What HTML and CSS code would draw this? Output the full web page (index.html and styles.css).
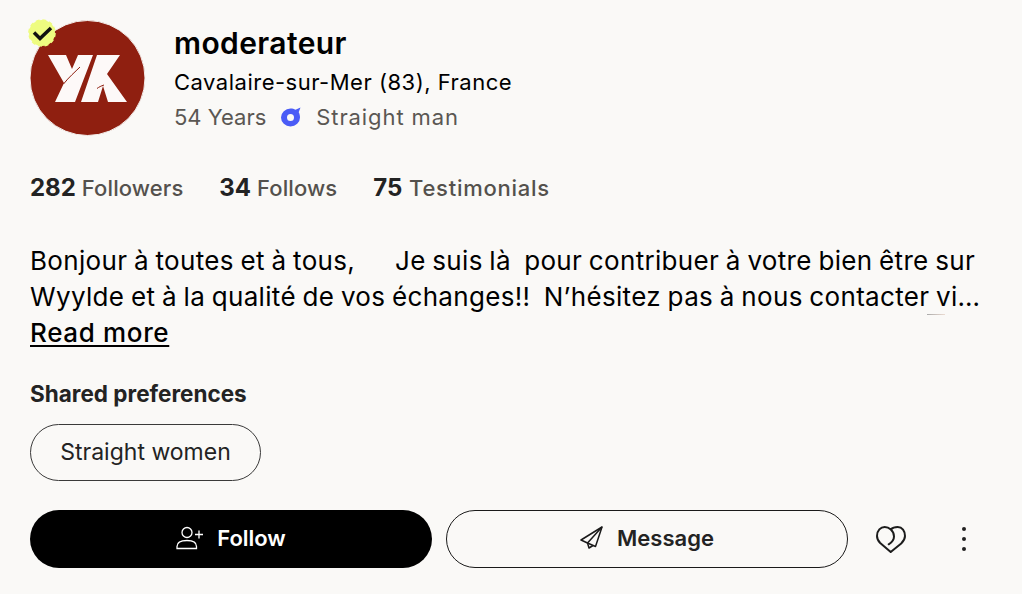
FILE: index.html
```html
<!DOCTYPE html>
<html lang="en">
<head>
<meta charset="utf-8">
<title>moderateur</title>
<link rel="stylesheet" href="styles.css">
</head>
<body>
<main class="profile">
  <header class="head">
    <div class="avatar">
      <svg class="logo" viewBox="0 0 116 116" aria-hidden="true">
        <circle cx="57.500" cy="58" r="57.500" fill="#8f1f10" stroke="#f4efec" stroke-width="1"/>
        <path fill="#fdf9f8" d="M18 35H36L42 49 48 35H63L45 82H25L34 63Z"/>
        <path fill="#fdf9f8" d="M67 35H90L77 54 97 82H78L73 66 68 82H51Z"/>
        <path fill="none" stroke="#8f1f10" stroke-width="1" d="M50 47C45 52 39 57 33.500 64M74 65C71 66 69 67 67 68.500"/>
      </svg>
      <svg class="badge" viewBox="0 0 28 28" aria-hidden="true">
        <circle cx="14" cy="14" r="13" fill="#eefc80"/>
        <circle cx="14" cy="14" r="13" fill="none" stroke="#eefc80" stroke-width="1.600" stroke-dasharray="4 2.800"/>
        <path fill="none" stroke="#111" stroke-width="3.500" d="M6 13.500l6 6 11-10.500"/>
      </svg>
    </div>
    <div class="identity">
      <h1 class="name">moderateur</h1>
      <p class="place">Cavalaire-sur-Mer (83), France</p>
      <p class="meta">
        <span>54 Years</span>
        <svg class="gender" viewBox="0 0 20 20" aria-hidden="true">
          <path fill="#4a5cf6" fill-rule="evenodd" d="M9.500 1.500c2 0 3.500.5 5 1.300L19.500.5l-1.800 4.800c.8 1.300 1.300 3.300 1.300 5.200a9.500 9 0 1 1-9.500-9zm0 5.500a3.500 3.500 0 1 0 0 7 3.500 3.500 0 0 0 0-7z"/>
        </svg>
        <span class="orientation">Straight man</span>
      </p>
    </div>
  </header>

  <ul class="stats">
    <li><b>282</b> Followers</li>
    <li><b>34</b> Follows</li>
    <li class="wide"><b>75</b> Testimonials</li>
  </ul>

  <section class="bio">
    <p class="bio-text">Bonjour à toutes et à tous,      Je suis là  pour contribuer à votre bien être sur Wyylde et à la qualité de vos échanges!!  N’hésitez pas à nous contacter via le formulaire du site.</p>
    <i class="clip-mark"></i>
    <a class="more" href="#">Read more</a>
  </section>

  <section class="prefs">
    <h2 class="prefs-title">Shared preferences</h2>
    <span class="chip">Straight women</span>
  </section>

  <div class="actions">
    <button class="btn primary">
      <svg class="ico" viewBox="0 0 30 26" aria-hidden="true">
        <g fill="none" stroke="#fff" stroke-width="1.300">
          <circle cx="12" cy="7.500" r="5"/>
          <path d="M2 23.500v-2c0-4 3.500-6 10-6s9.500 2 9.500 6v2z"/>
          <path d="M20 9.500h8M24 5.500v8"/>
        </g>
      </svg>
      Follow
    </button>
    <button class="btn outline">
      <svg class="ico" viewBox="0 0 26 26" aria-hidden="true">
        <g fill="none" stroke="#1a1a1a" stroke-width="1.500" stroke-linejoin="round">
          <path d="M23 2 2 15l6.500 3 8 3.500z"/>
          <path d="M23 2 8.500 18l1.500 5 4-2.500"/>
        </g>
      </svg>
      Message
    </button>
    <button class="icon-btn heart-btn" aria-label="Like">
      <svg class="heart" viewBox="0 0 29.600 27" aria-hidden="true">
        <path fill="none" stroke="#1c1c1c" stroke-width="2" stroke-linecap="round" stroke-linejoin="round" d="M14.500 26 4 17C1.500 14.500.8 12.500.8 10 .8 4.500 4.500 1 8.500 1 12.500 1 17.800 4.500 17.800 10.500 17.800 14 15.500 16.500 12.500 18.300M14.500 3.500C16.500 1.500 19 1 21.500 1 26 1 28.800 5 28.800 10 28.800 13 27 15.500 25 17.500L14.500 26"/>
      </svg>
    </button>
    <button class="icon-btn" aria-label="More">
      <span class="dots"><i></i><i></i><i></i></span>
    </button>
  </div>
</main>
</body>
</html>
```
FILE: styles.css
```css
* { box-sizing: border-box; }
html, body { margin: 0; height: 100%; }
body {
  background: #faf9f7;
  color: #000;
  font-family: "Inter", "Liberation Sans", sans-serif;
  overflow: hidden;
}
.profile { padding: 20px 30px 0; position: relative; width: 1022px; }
p, h1, h2, ul { margin: 0; padding: 0; }

.head { display: flex; gap: 28px; height: 117px; }
.avatar { position: relative; width: 116px; height: 116px; flex: none; }
.logo { display: block; width: 116px; height: 116px; }
.badge { position: absolute; left: -2px; top: -1px; width: 28px; height: 28px; }
.identity { padding-top: 2px; }
.name { font-size: 30px; font-weight: 600; line-height: 42px; height: 42px; letter-spacing: .4px; }
.place { font-size: 22px; line-height: 30px; margin-top: 3px; letter-spacing: .5px; height: 30px; }
.meta { display: flex; align-items: center; gap: 15px; margin-top: 5px; font-size: 22px; line-height: 30px; color: #5a5753; }
.orientation { letter-spacing: .9px; }
.gender { width: 20px; height: 20px; }

.stats { list-style: none; display: flex; gap: 36px; margin-top: 36px; font-size: 22px; font-weight: 500; line-height: 30px; color: #54514d; letter-spacing: .1px; }
.stats .wide { letter-spacing: .75px; }
.stats b { font-size: 24px; font-weight: 700; color: #232323; letter-spacing: 0; }

.bio { margin-top: 40px; position: relative; }
.bio-text {
  font-size: 26px; letter-spacing: .33px; word-spacing: -1px; line-height: 36px; white-space: pre-wrap; width: 951px; height: 72px;
  display: -webkit-box; -webkit-box-orient: vertical; -webkit-line-clamp: 2; overflow: hidden;
}
.clip-mark { position: absolute; left: 897px; top: 71px; width: 18px; height: 1px; background: linear-gradient(90deg, #aaa, #ecdcd2); }
.more { display: inline-block; font-size: 26px; letter-spacing: .65px; line-height: 36px; font-weight: 500; color: #000; text-decoration: underline; text-underline-offset: 3px; }

.prefs { margin-top: 28px; }
.prefs-title { font-size: 22.500px; font-weight: 700; line-height: 30px; color: #232323; }
.chip { display: inline-flex; align-items: center; margin-top: 15px; height: 57px; width: 231px; justify-content: center; border: 1px solid #3a3a3a; border-radius: 29px; padding-bottom: 2px; font-size: 23px; color: #232323; }

.actions { display: flex; align-items: center; margin-top: 29px; gap: 14px; }
.btn { display: flex; align-items: center; justify-content: center; width: 402px; height: 58px; border-radius: 29px; font: 600 22px "Inter", "Liberation Sans", sans-serif; cursor: pointer; }
.primary { background: #000; color: #fff; border: 0; gap: 12px; padding: 0 1px 2px 0; }
.outline { background: transparent; color: #232323; border: 1px solid #1a1a1a; gap: 10px; padding: 0 3px 2px 0; }
.ico { width: 30px; height: 26px; }
.icon-btn { background: none; border: 0; padding: 0; display: flex; align-items: center; justify-content: center; }
.heart-btn { margin-left: 14px; }
.heart { width: 30px; height: 27px; display: block; }
.dots { display: flex; flex-direction: column; gap: 6px; margin-left: 42px; }
.dots i { display: block; width: 4px; height: 4px; border-radius: 50%; background: #222; }
```
